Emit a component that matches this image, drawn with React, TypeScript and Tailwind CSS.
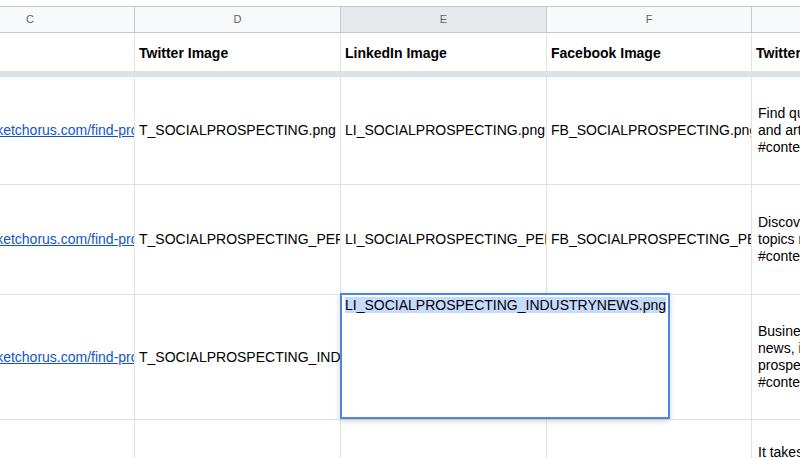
const font = "font-['Liberation_Sans',Arial,sans-serif]";

const letters = [
  { label: "C", w: "w-[209px]", active: false },
  { label: "D", w: "w-[206px]", active: false },
  { label: "E", w: "w-[206px]", active: true },
  { label: "F", w: "w-[205px]", active: false },
  { label: "G", w: "w-[220px]", active: false },
];

const widths = ["w-[209px]", "w-[206px]", "w-[206px]", "w-[205px]", "w-[220px]"];

const link = "https://marketchorus.com/find-prospects/";

type Row = {
  h: string;
  twitter: string;
  linkedin: string;
  facebook: string;
  copy: string[];
};

const rows: Row[] = [
  {
    h: "h-[108px]",
    twitter: "T_SOCIALPROSPECTING.png",
    linkedin: "LI_SOCIALPROSPECTING.png",
    facebook: "FB_SOCIALPROSPECTING.png",
    copy: ["Find quality industry news", "and articles to share with", "#contentmarketing"],
  },
  {
    h: "h-[110px]",
    twitter: "T_SOCIALPROSPECTING_PERSONALIZE.png",
    linkedin: "LI_SOCIALPROSPECTING_PERSONALIZE.png",
    facebook: "FB_SOCIALPROSPECTING_PERSONALIZE.png",
    copy: ["Discover the latest", "topics relevant to your", "#contentmarketing"],
  },
  {
    h: "h-[125px]",
    twitter: "T_SOCIALPROSPECTING_INDUSTRYNEWS.png",
    linkedin: "LI_SOCIALPROSPECTING_INDUSTRYNEWS.png",
    facebook: "",
    copy: ["Business and industry", "news, insights for social", "prospecting", "#contentmarketing"],
  },
  {
    h: "h-[117px]",
    twitter: "",
    linkedin: "",
    facebook: "",
    copy: ["It takes time to", "build relationships", "with prospects", "#socialselling"],
  },
];

function Cell({ w, h, children }: { w: string; h: string; children?: React.ReactNode }) {
  return (
    <div
      className={`${w} ${h} shrink-0 overflow-hidden whitespace-nowrap border-r border-b border-[#e2e2e2] pl-1 flex items-center`}
    >
      {children}
    </div>
  );
}

export default function App() {
  return (
    <div className={`relative w-[800px] h-[458px] overflow-hidden bg-white text-black ${font}`}>
      <div className="h-[6px] bg-white" />
      <div className="-ml-[74px] w-[1100px]">
        {/* column letters */}
        <div className="flex border-t border-[#c8c8c8]">
          {letters.map((l) => (
            <div
              key={l.label}
              className={`${l.w} h-[26px] shrink-0 border-r border-b border-[#c8c8c8] flex items-center justify-center text-[11px] text-[#5f6368] ${
                l.active ? "bg-[#e6e8eb]" : "bg-[#f8f9fa]"
              }`}
            >
              {l.label}
            </div>
          ))}
        </div>

        {/* header row */}
        <div className="flex">
          {["", "Twitter Image", "LinkedIn Image", "Facebook Image", "Twitter Copy"].map((t, i) => (
            <Cell key={i} w={widths[i]} h="h-[39px]">
              <span className="pt-[2px] text-[14px] font-bold">{t}</span>
            </Cell>
          ))}
        </div>
        <div className="h-[5px] bg-[#dde2e8]" />

        {rows.map((r, idx) => (
          <div key={idx} className="flex">
            <Cell w={widths[0]} h={r.h}>
              {idx < 3 && <span className="text-[14px] text-[#1155cc] underline">{link}</span>}
            </Cell>
            <Cell w={widths[1]} h={r.h}>
              <span className="text-[14px]">{r.twitter}</span>
            </Cell>
            <Cell w={widths[2]} h={r.h}>
              <span className="text-[14px]">{r.linkedin}</span>
            </Cell>
            <Cell w={widths[3]} h={r.h}>
              <span className="text-[14px]">{r.facebook}</span>
            </Cell>
            <Cell w={widths[4]} h={r.h}>
              <div className="pl-[2px] text-[14px] leading-[17px]">
                {r.copy.map((c) => (
                  <div key={c}>{c}</div>
                ))}
              </div>
            </Cell>
          </div>
        ))}
      </div>

      {/* in-cell editor */}
      <div className="absolute left-[340px] top-[293px] w-[330px] h-[126px] border-2 border-[#4a86e8] bg-white shadow-[0_2px_6px_rgba(0,0,0,0.18)] px-[3px] pt-[2px] text-[14px] leading-[16px]">
        <span className="bg-[#c6dafc]">LI_SOCIALPROSPECTING_INDUSTRYNEWS.png</span>
      </div>
    </div>
  );
}
